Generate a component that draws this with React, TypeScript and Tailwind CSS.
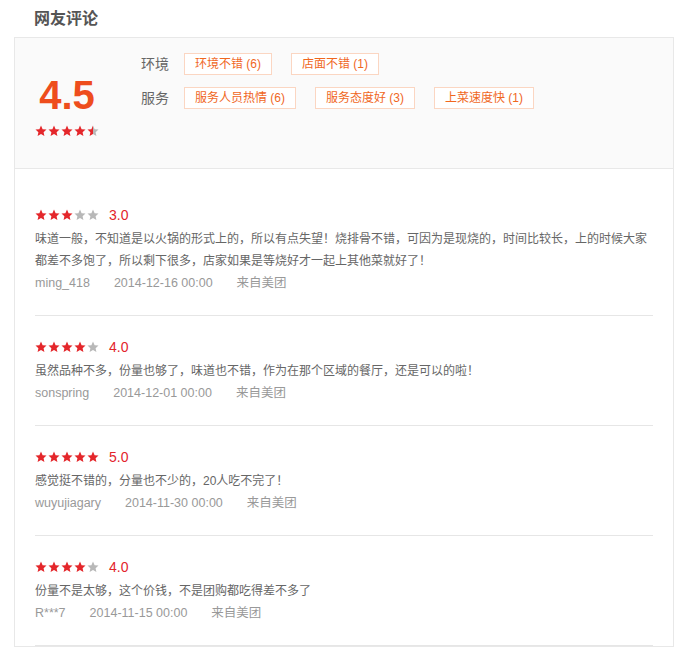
import React from "react";

const tagRows = [
  { label: "环境", tags: ["环境不错 (6)", "店面不错 (1)"] },
  { label: "服务", tags: ["服务人员热情 (6)", "服务态度好 (3)", "上菜速度快 (1)"] },
];

const reviews = [
  {
    score: 3,
    text: "味道一般，不知道是以火锅的形式上的，所以有点失望！烧排骨不错，可因为是现烧的，时间比较长，上的时候大家都差不多饱了，所以剩下很多，店家如果是等烧好才一起上其他菜就好了！",
    user: "ming_418",
    date: "2014-12-16 00:00",
  },
  {
    score: 4,
    text: "虽然品种不多，份量也够了，味道也不错，作为在那个区域的餐厅，还是可以的啦！",
    user: "sonspring",
    date: "2014-12-01 00:00",
  },
  {
    score: 5,
    text: "感觉挺不错的，分量也不少的，20人吃不完了！",
    user: "wuyujiagary",
    date: "2014-11-30 00:00",
  },
  {
    score: 4,
    text: "份量不是太够，这个价钱，不是团购都吃得差不多了",
    user: "R***7",
    date: "2014-11-15 00:00",
  },
];

const STAR = "M6 0.6 L7.6 4.2 L11.5 4.6 L8.6 7.2 L9.4 11.1 L6 9.1 L2.6 11.1 L3.4 7.2 L0.5 4.6 L4.4 4.2 Z";

function Star({ fill, size = 12 }: { fill: "full" | "half" | "none"; size?: number }) {
  const id = React.useId();
  return (
    <svg width={size} height={size} viewBox="0 0 12 12">
      {fill === "half" && (
        <defs>
          <linearGradient id={id}>
            <stop offset="50%" stopColor="#e4272b" />
            <stop offset="50%" stopColor="#b8b8b8" />
          </linearGradient>
        </defs>
      )}
      <path
        d={STAR}
        fill={fill === "full" ? "#e4272b" : fill === "none" ? "#b8b8b8" : `url(#${id})`}
      />
    </svg>
  );
}

function Stars({ value, size = 12 }: { value: number; size?: number }) {
  return (
    <div className="flex items-center gap-px">
      {[1, 2, 3, 4, 5].map((i) => (
        <Star
          key={i}
          size={size}
          fill={value >= i ? "full" : value >= i - 0.5 ? "half" : "none"}
        />
      ))}
    </div>
  );
}

export default function App() {
  return (
    <div className="min-h-[650px] bg-white px-[14px] font-['Liberation_Sans','Noto_Sans_CJK_SC',sans-serif]">
      {/* 标题 */}
      <div className="flex h-[37px] items-center pl-[20px] text-[16px] font-bold text-[#555]">
        网友评论
      </div>

      <div className="border border-[#e8e8e8]">
        {/* 总评 */}
        <div className="flex h-[131px] border-b border-[#e8e8e8] bg-[#fafafa]">
          <div className="ml-[20px] mt-[37px] flex w-[64px] flex-col items-center">
            <div className="h-[40px] text-[40px] font-bold leading-[40px] text-[#ee4d1d]">4.5</div>
            <div className="mt-[10px]">
              <Stars value={4.5} />
            </div>
          </div>

          <div className="ml-[42px] flex flex-col gap-[12px] pt-[15px]">
            {tagRows.map((row) => (
              <div key={row.label} className="flex items-center">
                <span className="mr-[15px] text-[14px] text-[#666]">{row.label}</span>
                <div className="flex gap-[19px]">
                  {row.tags.map((t) => (
                    <span
                      key={t}
                      className="flex h-[22px] items-center border border-[#fbd6c2] bg-white px-[10px] text-[12px] text-[#f0671e]"
                    >
                      {t}
                    </span>
                  ))}
                </div>
              </div>
            ))}
          </div>
        </div>

        {/* 评论列表 */}
        <div className="px-[20px] pt-[15px]">
          {reviews.map((r, idx) => (
            <div key={idx} className="border-b border-[#e6e6e6] pb-[21px] pt-[18px]">
              <div className="flex h-[26px] items-center">
                <Stars value={r.score} />
                <span className="ml-[10px] text-[14px] text-[#e3242b]">{r.score.toFixed(1)}</span>
              </div>
              <p className="text-[12px] leading-[22px] text-[#666]">{r.text}</p>
              <div className="flex h-[22px] items-center gap-[24px] text-[12.5px] text-[#999]">
                <span>{r.user}</span>
                <span>{r.date}</span>
                <span>来自美团</span>
              </div>
            </div>
          ))}
        </div>
      </div>
    </div>
  );
}
